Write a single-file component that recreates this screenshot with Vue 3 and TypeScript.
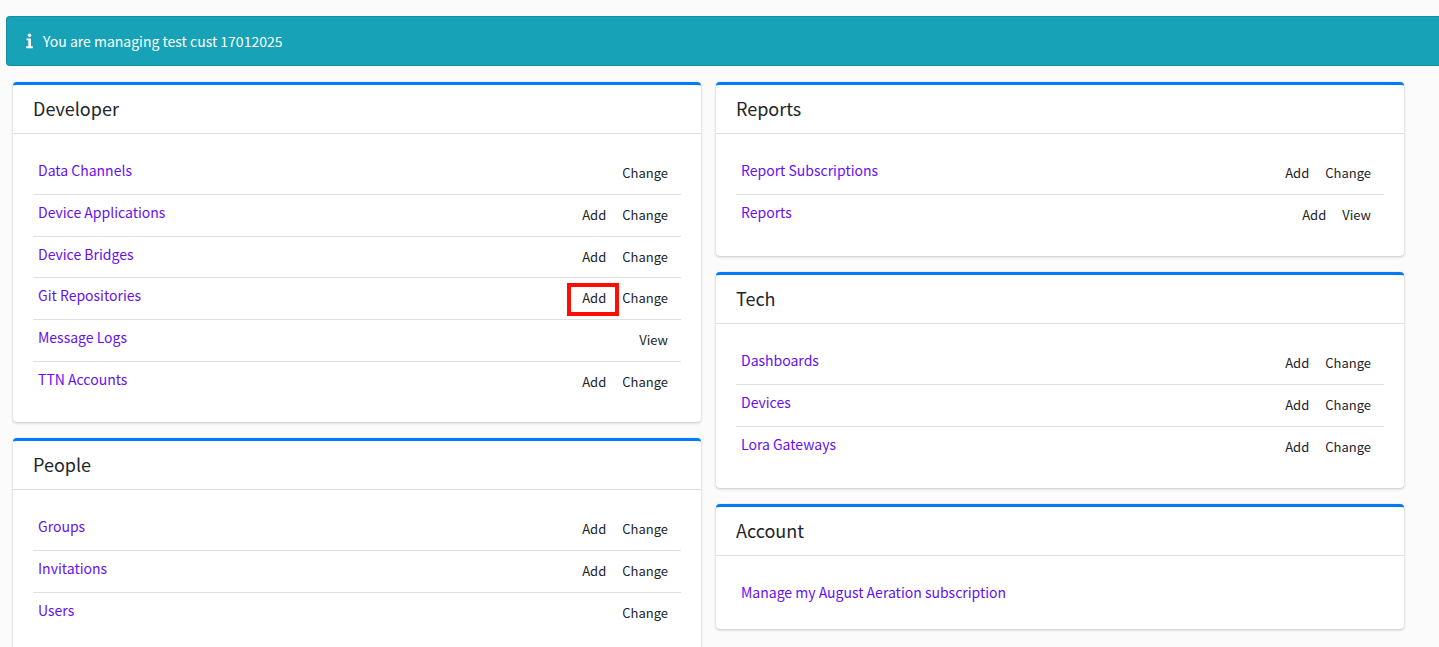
<script setup lang="ts">
interface Row {
  name: string
  actions: string[]
  highlight?: string
}

interface Section {
  title: string
  rows: Row[]
}

const columns: Section[][] = [
  [
    {
      title: 'Developer',
      rows: [
        { name: 'Data Channels', actions: ['Change'] },
        { name: 'Device Applications', actions: ['Add', 'Change'] },
        { name: 'Device Bridges', actions: ['Add', 'Change'] },
        { name: 'Git Repositories', actions: ['Add', 'Change'], highlight: 'Add' },
        { name: 'Message Logs', actions: ['View'] },
        { name: 'TTN Accounts', actions: ['Add', 'Change'] },
      ],
    },
    {
      title: 'People',
      rows: [
        { name: 'Groups', actions: ['Add', 'Change'] },
        { name: 'Invitations', actions: ['Add', 'Change'] },
        { name: 'Users', actions: ['Change'] },
      ],
    },
  ],
  [
    {
      title: 'Reports',
      rows: [
        { name: 'Report Subscriptions', actions: ['Add', 'Change'] },
        { name: 'Reports', actions: ['Add', 'View'] },
      ],
    },
    {
      title: 'Tech',
      rows: [
        { name: 'Dashboards', actions: ['Add', 'Change'] },
        { name: 'Devices', actions: ['Add', 'Change'] },
        { name: 'Lora Gateways', actions: ['Add', 'Change'] },
      ],
    },
    {
      title: 'Account',
      rows: [{ name: 'Manage my August Aeration subscription', actions: [] }],
    },
  ],
]
</script>

<template>
  <main class="page">
    <div class="alert" role="status">
      <svg class="info" viewBox="0 0 7 16" aria-hidden="true">
        <circle cx="3.5" cy="2.2" r="1.8" fill="currentColor" />
        <path fill="currentColor" d="M0.5 5.5H5V13.3H6.8V15.2H0.2V13.3H2.3V7.3H0.5Z" />
      </svg>
      <span>You are managing test cust 17012025</span>
    </div>
    <div class="columns">
      <div v-for="(column, index) in columns" :key="index" class="column">
        <section v-for="section in column" :key="section.title" class="card">
          <header class="card-header">
            <h2>{{ section.title }}</h2>
          </header>
          <div class="card-body">
            <table :aria-label="section.title">
              <tbody>
                <tr v-for="row in section.rows" :key="row.name">
                  <td><a class="name" href="#">{{ row.name }}</a></td>
                  <td v-if="row.actions.length" class="actions">
                    <div class="group">
                      <a
                        v-for="action in row.actions"
                        :key="action"
                        href="#"
                        class="action"
                        :class="{ marked: row.highlight === action }"
                      >{{ action }}</a>
                    </div>
                  </td>
                </tr>
              </tbody>
            </table>
          </div>
        </section>
      </div>
    </div>
  </main>
</template>

<style>
body {
  margin: 0;
  background: #fbfbfb;
}
</style>

<style scoped>
.page {
  box-sizing: border-box;
  height: 100vh;
  padding-top: 16px;
  overflow-y: auto;
  scrollbar-width: none;
  background: #fbfbfb;
  color: #212529;
  font-family: "Source Sans Pro", "Noto Sans CJK SC", "Noto Sans", sans-serif;
  font-size: 14px;
  line-height: 24px;
}

.alert {
  display: flex;
  align-items: center;
  gap: 10px;
  margin: 0 0 16px 6px;
  padding: 12px 19px;
  border: 1px solid #148ea1;
  border-right: 0;
  border-radius: 4px 0 0 4px;
  background: #17a2b8;
  color: #fff;
}

.info {
  width: 7px;
  height: 16px;
}

.columns {
  display: grid;
  grid-template-columns: 1fr 1fr;
  align-items: start;
  gap: 15px;
  padding: 0 35px 0 13px;
}

.card {
  margin-bottom: 16px;
  border-top: 3px solid #007bff;
  border-radius: 4px;
  background: #fff;
  box-shadow: 0 0 1px rgba(0, 0, 0, 0.13), 0 1px 3px rgba(0, 0, 0, 0.2);
}

.card-header {
  padding: 11px 20px 13px;
  border-bottom: 1px solid #dfdfdf;
}

h2 {
  margin: 0;
  font-size: 18px;
  font-weight: 400;
  line-height: 24px;
}

.card-body {
  padding: 20px;
}

table {
  width: 100%;
  border-collapse: separate;
  border-spacing: 0;
}

td {
  padding: 5px;
  vertical-align: top;
}

tr:first-child td {
  padding-top: 4px;
}

tr + tr td {
  border-top: 1px solid #dee2e6;
}

tr:nth-child(3n) td {
  padding-bottom: 4px;
}

tr:nth-child(3):last-child td {
  padding-bottom: 5px;
}

.name {
  display: block;
  color: #6610f2;
  text-decoration: none;
}

.group {
  display: flex;
  justify-content: flex-end;
}

.action {
  position: relative;
  padding: 4px 8px 6px;
  color: #212529;
  font-size: 13px;
  line-height: 21px;
  text-decoration: none;
}

.marked::after {
  content: "";
  position: absolute;
  inset: 0 -5px -2px -7px;
  border: 4px solid #fe0d00;
}
</style>
